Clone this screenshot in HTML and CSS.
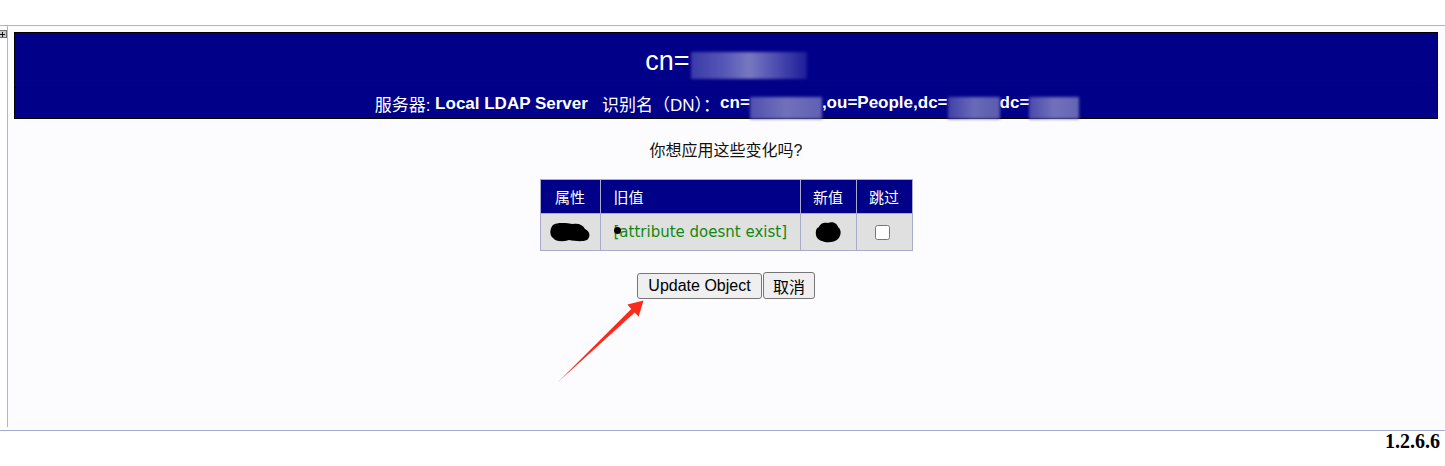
FILE: index.html
```html
<!DOCTYPE html>
<html lang="zh-CN">
<head>
<meta charset="utf-8">
<title>phpLDAPadmin</title>
<link rel="stylesheet" href="styles.css">
</head>
<body>
<div class="topbar"></div>
<div class="frame">
  <div class="side">
    <div class="handle"><span class="handle-h"></span><span class="handle-v"></span></div>
  </div>
  <div class="main">
    <div class="head">
      <div class="head-title">cn=<span class="blur blur-title"></span></div>
      <div class="head-sub">服务器: <b>Local LDAP Server</b>   识别名（DN）：<b>cn=<span class="blur blur-a"></span>,ou=People,dc=<span class="blur blur-b"></span>dc=<span class="blur blur-c"></span></b></div>
    </div>
    <p class="question">你想应用这些变化吗?</p>
    <table class="changes">
      <thead>
        <tr>
          <th class="c-attr">属性</th>
          <th class="c-old">旧值</th>
          <th class="c-new">新值</th>
          <th class="c-skip">跳过</th>
        </tr>
      </thead>
      <tbody>
        <tr>
          <td class="c-attr">
            <svg class="blob" width="42" height="22" viewBox="0 0 42 22"><path d="M4 4 C8 1 18 2 24 3 C30 2 34 4 36 8 C41 10 42 16 38 19 C33 21 26 20 20 19 C14 21 7 21 4 17 C0 14 1 7 4 4 Z" fill="#000"/></svg>
          </td>
          <td class="c-old"><span class="dot"></span><span class="missing">[attribute doesnt exist]</span></td>
          <td class="c-new">
            <svg class="blob" width="28" height="23" viewBox="0 0 28 23"><path d="M5 6 C6 2 11 1 14 2 C18 0 23 2 24 6 C28 9 27 15 24 18 C20 22 12 22 8 20 C3 19 1 14 2 10 C2 8 3 7 5 6 Z" fill="#000"/></svg>
          </td>
          <td class="c-skip"><input type="checkbox" class="check"></td>
        </tr>
      </tbody>
    </table>
    <div class="actions">
      <button class="btn btn-update" type="button">Update Object</button><button class="btn btn-cancel" type="button">取消</button>
    </div>
  </div>
</div>
<div class="footer">1.2.6.6</div>
<svg class="arrow" width="1445" height="466" viewBox="0 0 1445 466">
  <polygon points="558,382 631.2,308.9 627.4,304.6 643.5,300.5 638.6,316.8 634.8,312.6" fill="#fd2a1b"/>
</svg>
</body>
</html>
```
FILE: styles.css
```css
html, body {
  margin: 0;
  padding: 0;
  background: #ffffff;
}
body {
  width: 1445px;
  height: 466px;
  position: relative;
  overflow: hidden;
  font-family: "Liberation Sans", "Noto Sans CJK SC", Arial, sans-serif;
  color: #000;
}
.topbar {
  height: 25px;
  background: #ffffff;
}
.frame {
  display: flex;
  height: 404px;
  border-top: 1px solid #b4b4c8;
  border-bottom: 1px solid #a9a9d2;
}
.side {
  width: 7px;
  border-right: 1px solid #b4b4c8;
  background: #ffffff;
  margin-bottom: 3px;
}
.handle {
  position: relative;
  margin-top: 4px;
  width: 7px;
  height: 8px;
  background: #c8c8c8;
  border: 1px solid #6e6e6e;
  border-left: none;
  box-sizing: border-box;
}
.handle-h {
  position: absolute;
  left: 0;
  top: 3px;
  width: 5px;
  height: 1px;
  background: #111;
}
.handle-v {
  position: absolute;
  left: 2px;
  top: 1px;
  width: 1px;
  height: 5px;
  background: #111;
}
.main {
  flex: 1;
  background: #fcfcfe;
  padding: 6px 7px 0 6px;
  display: flex;
  flex-direction: column;
  align-items: center;
}
.head {
  align-self: stretch;
  background: #000088;
  border: 1px solid #000;
  color: #fff;
}
.head-title {
  height: 55px;
  border-bottom: 1px solid #000;
  display: flex;
  align-items: center;
  justify-content: center;
  font-size: 27px;
  padding-top: 3px;
  box-sizing: border-box;
}
.head-sub {
  height: 30px;
  display: flex;
  align-items: center;
  justify-content: center;
  font-size: 17px;
  white-space: pre;
  padding-top: 1px;
  padding-left: 2px;
  box-sizing: border-box;
}
.head-sub b {
  font-weight: bold;
}
.blur {
  display: inline-block;
  vertical-align: middle;
  filter: blur(1.5px);
}
.blur-title {
  width: 116px;
  height: 27px;
  background: linear-gradient(90deg, #3a3aa8 0%, #5858b8 30%, #7878c0 50%, #4a4ab0 75%, #1d1d98 100%);
  margin-left: 1px;
  margin-top: 7px;
}
.blur-a {
  width: 72px;
  height: 22px;
  background: linear-gradient(90deg, #5050b0, #7070bc 50%, #6060b4);
  margin-top: 8px;
}
.blur-b {
  width: 52px;
  height: 22px;
  background: linear-gradient(90deg, #4040a8, #6a6ab8 50%, #5a5ab0);
  margin-top: 8px;
}
.blur-c {
  width: 50px;
  height: 22px;
  background: linear-gradient(90deg, #4a4aac, #7070bc 50%, #6464b4);
  margin-top: 8px;
}
.question {
  margin: 21px 0 0 0;
  font-size: 16px;
  line-height: 22px;
  color: #111;
}
.changes {
  margin-top: 17px;
  border-collapse: collapse;
  border: 1px solid #aaaacc;
  font-size: 15px;
}
.changes th,
.changes td {
  border: 1px solid #aaaacc;
  padding: 0;
}
.changes th {
  background: #000088;
  color: #fff;
  font-weight: normal;
  height: 33px;
}
.changes td {
  background: #e0e0e0;
  height: 36px;
}
.c-attr { width: 59px; text-align: center; }
.c-old { width: 200px; text-align: left; padding-left: 13px !important; box-sizing: border-box; }
.c-new { width: 55px; text-align: center; }
.c-skip { width: 55px; text-align: center; }
.changes td.c-old {
  position: relative;
}
.blob {
  display: block;
  margin: 0 auto;
}
.missing {
  color: #118811;
  font-family: "DejaVu Sans", "Noto Sans CJK SC", sans-serif;
  font-size: 15px;
}
.dot {
  position: absolute;
  left: 13px;
  top: 13px;
  width: 7px;
  height: 7px;
  border-radius: 50%;
  background: #000;
}
.check {
  width: 15px;
  height: 15px;
  margin: 4px 4px 0 0;
}
.actions {
  margin-top: 21px;
  display: flex;
  align-items: flex-end;
}
.btn {
  font-family: "Liberation Sans", "Noto Sans CJK SC", Arial, sans-serif;
  font-size: 16px;
  color: #000;
  background: #efefef;
  border: 1px solid #767676;
  border-radius: 3px;
  padding: 0 8px;
  margin: 0;
}
.btn-update {
  height: 26px;
  width: 125px;
}
.btn-cancel {
  height: 27px;
  width: 52px;
  margin-left: 1px;
}
.footer {
  text-align: right;
  padding-right: 5px;
  font-family: "Liberation Serif", serif;
  font-weight: bold;
  font-size: 20px;
  line-height: 20px;
  padding-top: 0;
}
.arrow {
  position: absolute;
  left: 0;
  top: 0;
  pointer-events: none;
}
```
